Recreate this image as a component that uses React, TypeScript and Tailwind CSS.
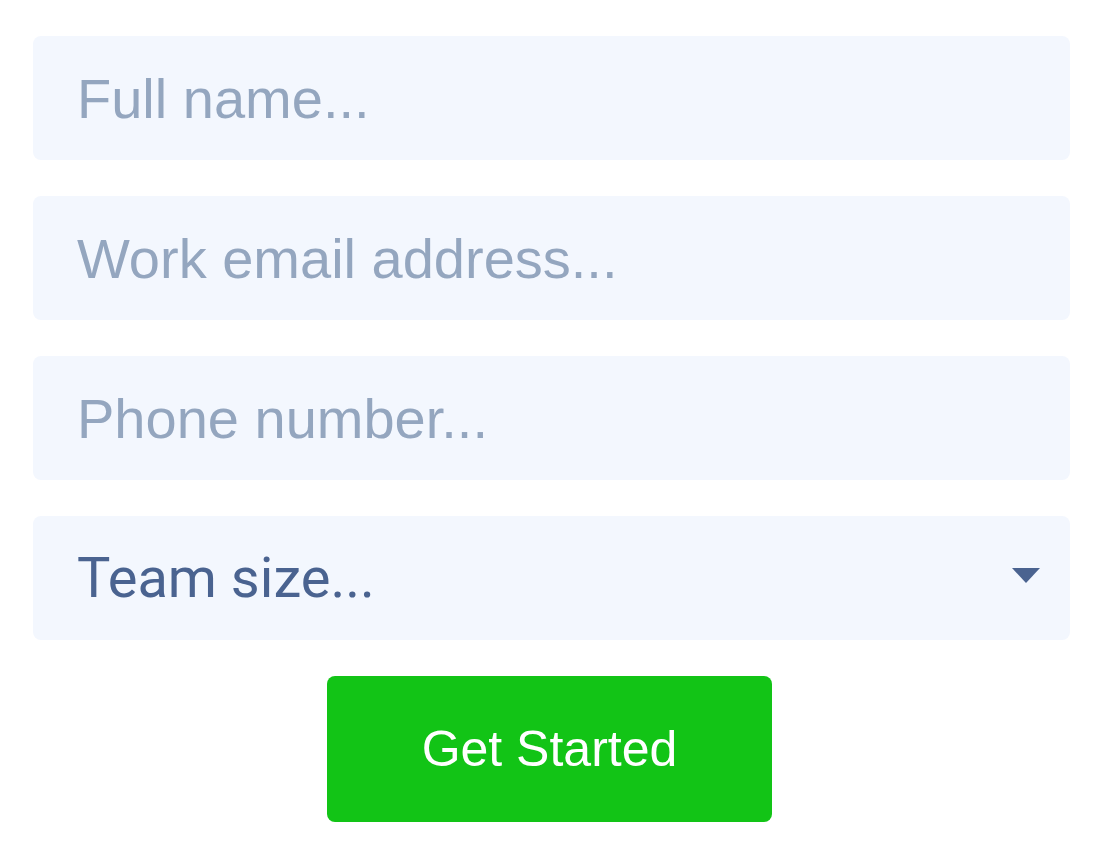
import { useState } from "react";

const fieldClass =
  "w-full h-[124px] rounded-[8px] bg-[#f3f7fe] pl-[44px] pr-6 text-[56px] text-[#4a6390] placeholder:text-[#94a6bf] outline-none font-['Liberation_Sans',Arial,sans-serif]";

export default function App() {
  const [teamSize, setTeamSize] = useState("");

  return (
    <div className="w-[1108px] h-[844px] bg-white">
      <form className="flex flex-col items-center gap-[36px] pt-[36px] pl-[33px] pr-[38px]" onSubmit={(e) => e.preventDefault()}>
        <input type="text" placeholder="Full name..." className={fieldClass} />
        <input type="email" placeholder="Work email address..." className={fieldClass} />
        <input type="tel" placeholder="Phone number..." className={fieldClass} />

        <div className="relative w-full">
          <select
            value={teamSize}
            onChange={(e) => setTeamSize(e.target.value)}
            className="w-full h-[124px] appearance-none rounded-[8px] bg-[#f3f7fe] pl-[44px] pr-20 text-[56px] text-[#4a6390] outline-none font-['Roboto',sans-serif]"
          >
            <option value="">Team size...</option>
            <option value="1-10">1-10</option>
            <option value="11-50">11-50</option>
            <option value="51-200">51-200</option>
            <option value="200+">200+</option>
          </select>
          <svg
            className="pointer-events-none absolute right-[30px] top-[52px]"
            width="28"
            height="15"
            viewBox="0 0 28 15"
          >
            <path d="M0 0 L28 0 L14 15 Z" fill="#4a6390" />
          </svg>
        </div>

        <button
          type="submit"
          className="-ml-[4px] w-[445px] h-[146px] rounded-[8px] bg-[#12c416] text-white text-[50px] font-['Liberation_Sans',Arial,sans-serif]"
        >
          Get Started
        </button>
      </form>
    </div>
  );
}
